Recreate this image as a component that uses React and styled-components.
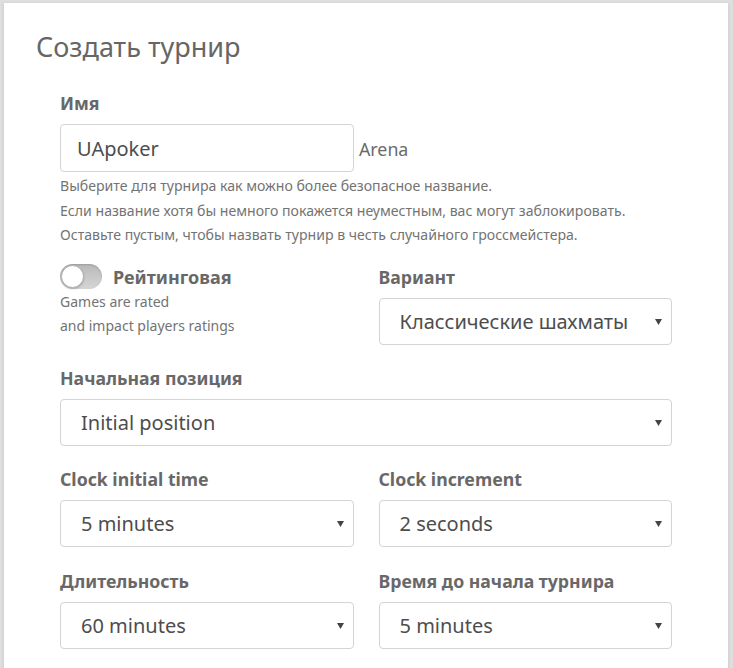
import React from 'react'
import styled, { createGlobalStyle } from 'styled-components'

const GlobalStyle = createGlobalStyle`
  html, body {
    margin: 0;
    padding: 0;
    background: #dedede;
    font-family: "Noto Sans", "Open Sans", sans-serif;
    color: #4d4d4d;
  }
`

const Page = styled.div`
  padding: 3px 5px 0 4px;
  height: 665px;
  overflow: hidden;
`

const Panel = styled.main`
  background: #fff;
  min-height: 700px;
  box-shadow: 0 1px 3px rgba(0, 0, 0, 0.12);
  padding: 24px 56px 0 32px;
`

const Title = styled.h1`
  margin: 0 0 24px;
  font-size: 27px;
  font-weight: 400;
  line-height: 40px;
  color: #666;
`

const Form = styled.div`
  padding-left: 24px;
`

const Group = styled.div`
  margin-bottom: ${p => p.$mb || 21}px;
`

const Label = styled.label`
  display: block;
  font-size: 17.7px;
  font-weight: 700;
  line-height: 24px;
  color: #686868;
  margin-bottom: 9px;
`

const NameRow = styled.div`
  display: flex;
  align-items: center;
  gap: 5px;
`

const TextInput = styled.input`
  box-sizing: border-box;
  width: 294px;
  height: 48px;
  border: 1px solid #d4d4d4;
  border-radius: 4px;
  padding: 0 16px;
  font: inherit;
  font-size: 20px;
  color: #4d4d4d;
  outline: none;
`

const Suffix = styled.span`
  font-size: 17.8px;
  color: #6b6b6b;
  padding-top: 2px;
`

const Help = styled.div`
  margin-top: 2px;
  font-size: 14.1px;
  line-height: 24.5px;
  color: #737373;
`

const Columns = styled.div`
  display: grid;
  grid-template-columns: 1fr 1fr;
  column-gap: 25px;
`

const ToggleRow = styled.div`
  display: flex;
  align-items: center;
  gap: 11px;
  height: 24px;
`

const Track = styled.span`
  position: relative;
  box-sizing: border-box;
  width: 42px;
  height: 25px;
  border-radius: 13px;
  background: linear-gradient(to bottom, #b8b8b8, #d6d6d6);
  box-shadow: inset 0 1px 2px rgba(0, 0, 0, 0.15);
`

const Knob = styled.span`
  position: absolute;
  top: 1px;
  left: 1px;
  box-sizing: border-box;
  width: 23px;
  height: 23px;
  border-radius: 50%;
  background: #fff;
  border: 1px solid #b0b0b0;
  box-shadow: 0 1px 2px rgba(0, 0, 0, 0.2);
`

const ToggleLabel = styled.span`
  font-size: 18px;
  font-weight: 700;
  color: #686868;
`

const Hint = styled.div`
  font-size: 14px;
  line-height: 24px;
  color: #737373;
  margin-top: 1px;
`

const SelectWrap = styled.div`
  position: relative;
`

const Select = styled.select`
  appearance: none;
  box-sizing: border-box;
  width: 100%;
  height: 47px;
  border: 1px solid #d4d4d4;
  border-radius: 4px;
  background: #fff;
  padding: 0 30px 0 20px;
  font: inherit;
  font-size: 20px;
  color: #4d4d4d;
  outline: none;
`

const Caret = styled.svg`
  position: absolute;
  right: 10px;
  top: 21px;
  width: 7px;
  height: 6px;
  pointer-events: none;
`

const Dropdown = ({ value }) => (
  <SelectWrap>
    <Select defaultValue={value}>
      <option>{value}</option>
    </Select>
    <Caret viewBox="0 0 7 6">
      <path d="M0 0H7L3.5 6Z" fill="#444" />
    </Caret>
  </SelectWrap>
)

const Field = ({ label, value, mb }) => (
  <Group $mb={mb}>
    <Label>{label}</Label>
    <Dropdown value={value} />
  </Group>
)

export default function App() {
  return (
    <>
      <GlobalStyle />
      <Page>
        <Panel>
          <Title>Создать турнир</Title>
          <Form>
            <Group $mb={17}>
              <Label>Имя</Label>
              <NameRow>
                <TextInput defaultValue="UApoker" />
                <Suffix>Arena</Suffix>
              </NameRow>
              <Help>
                Выберите для турнира как можно более безопасное название.<br />
                Если название хотя бы немного покажется неуместным, вас могут заблокировать.<br />
                Оставьте пустым, чтобы назвать турнир в честь случайного гроссмейстера.
              </Help>
            </Group>
            <Columns>
              <Group>
                <ToggleRow>
                  <Track><Knob /></Track>
                  <ToggleLabel>Рейтинговая</ToggleLabel>
                </ToggleRow>
                <Hint>
                  Games are rated<br />
                  and impact players ratings
                </Hint>
              </Group>
              <Field label="Вариант" value="Классические шахматы" />
            </Columns>
            <Field label="Начальная позиция" value="Initial position" />
            <Columns>
              <Field label="Clock initial time" value="5 minutes" mb={22} />
              <Field label="Clock increment" value="2 seconds" mb={22} />
            </Columns>
            <Columns>
              <Field label="Длительность" value="60 minutes" />
              <Field label="Время до начала турнира" value="5 minutes" />
            </Columns>
          </Form>
        </Panel>
      </Page>
    </>
  )
}
